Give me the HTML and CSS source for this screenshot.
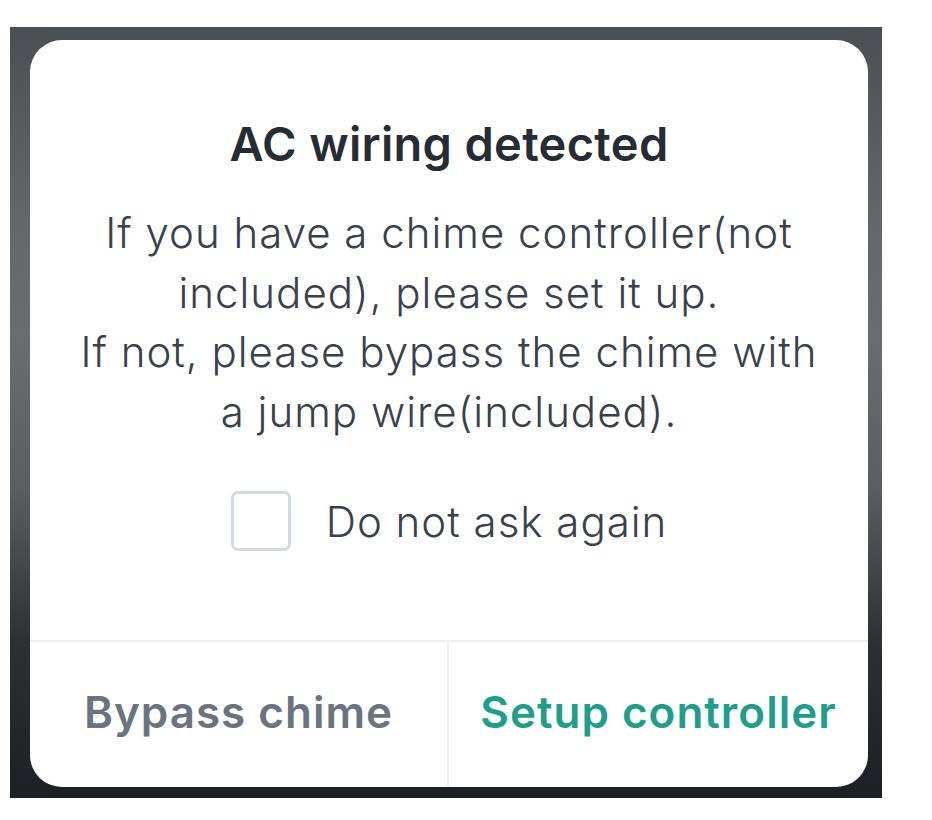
FILE: index.html
```html
<!DOCTYPE html>
<html>
<head>
<meta charset="utf-8">
<link rel="stylesheet" href="styles.css">
</head>
<body>
<div class="backdrop">
  <div class="dialog">
    <div class="content">
      <h1 class="title">AC wiring detected</h1>
      <p class="message">If you have a chime controller(not<br>included), please set it up.<br>If not, please bypass the chime with<br>a jump wire(included).</p>
      <label class="check">
        <span class="box"></span>
        <span class="check-label">Do not ask again</span>
      </label>
    </div>
    <div class="footer">
      <button class="btn btn-secondary">Bypass chime</button>
      <button class="btn btn-primary">Setup controller</button>
    </div>
  </div>
</div>
</body>
</html>
```

FILE: styles.css
```css
html, body {
  margin: 0;
  padding: 0;
  background: #ffffff;
}
body {
  font-family: Inter, "Noto Sans", sans-serif;
}
.backdrop {
  margin: 27px 0 0 10px;
  width: 872px;
  height: 771px;
  box-sizing: border-box;
  padding: 13px 14px 11px 20px;
  background: linear-gradient(to bottom, #4b4e52 0%, #63666a 25%, #6a6d70 40%, #5a5d61 60%, #2c2f33 80%, #1c1f23 100%);
}
.dialog {
  width: 100%;
  height: 100%;
  background: #ffffff;
  border-radius: 32px;
  display: flex;
  flex-direction: column;
  overflow: hidden;
}
.content {
  flex: 1;
  display: flex;
  flex-direction: column;
  align-items: center;
  padding-top: 76px;
}
.title {
  margin: 0;
  font-size: 47px;
  font-weight: 600;
  letter-spacing: 0.3px;
  color: #262c34;
  line-height: 56px;
}
.message {
  margin: 31px 0 0;
  font-size: 42px;
  font-weight: 300;
  letter-spacing: 1px;
  color: #39414b;
  line-height: 59.5px;
  text-align: center;
}
.check {
  margin-top: 50px;
  display: flex;
  align-items: center;
  gap: 35px;
}
.box {
  width: 60px;
  height: 60px;
  border: 3px solid #d3d9e0;
  border-radius: 7px;
  box-sizing: border-box;
}
.check-label {
  font-size: 42px;
  font-weight: 300;
  letter-spacing: 1px;
  color: #39414b;
}
.footer {
  height: 147px;
  display: grid;
  grid-template-columns: 419px 1fr;
  border-top: 2px solid #eef0f2;
  box-sizing: border-box;
}
.btn {
  background: none;
  border: none;
  font-family: inherit;
  font-size: 44px;
  font-weight: 600;
  letter-spacing: 1px;
  padding: 0 0 6px;
  cursor: pointer;
}
.btn-secondary {
  color: #6a7480;
  border-right: 2px solid #eef0f2;
}
.btn-primary {
  color: #1f9e8a;
}
```
